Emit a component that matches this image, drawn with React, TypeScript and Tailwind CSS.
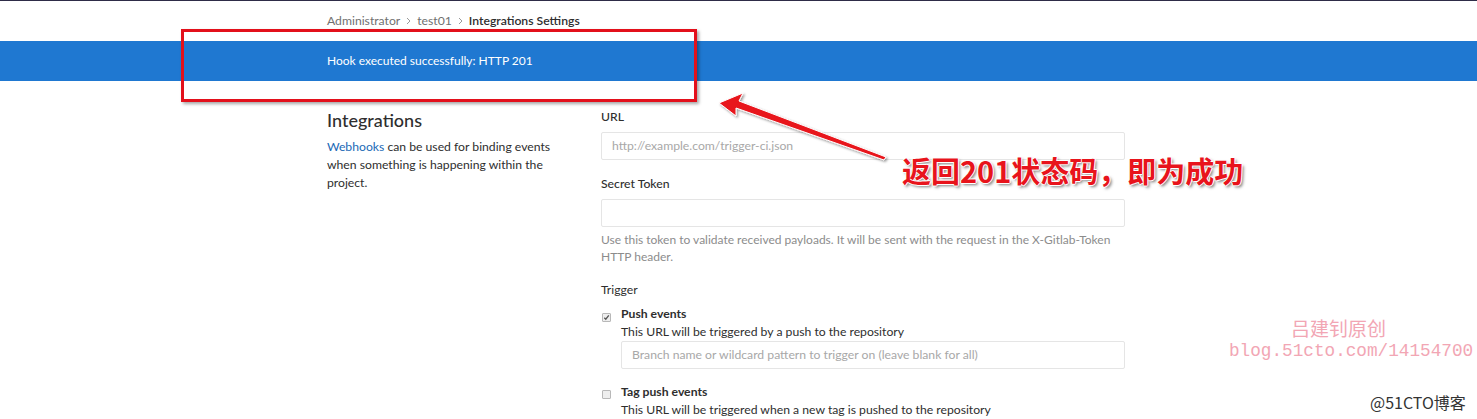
import React from "react";

const font = "font-['Lato','Noto_Sans',sans-serif]";

function Checkbox({ checked }: { checked?: boolean }) {
  return (
    <span className="inline-flex items-center justify-center w-[9px] h-[9px] border border-[#b8b8b8] bg-[#eeeeee] rounded-[1px]">
      {checked && (
        <svg width="7" height="7" viewBox="0 0 8 8">
          <path d="M1.5 4.2 L3.2 6 L6.6 1.6" stroke="#555" strokeWidth="1.5" fill="none" />
        </svg>
      )}
    </span>
  );
}

function Chevron() {
  return (
    <svg width="5" height="8" viewBox="0 0 5 8" className="mx-[6px]">
      <path d="M1 1 L4 4 L1 7" stroke="#9a9a9a" strokeWidth="1" fill="none" />
    </svg>
  );
}

export default function App() {
  return (
    <div className={`relative w-[1477px] h-[419px] overflow-hidden bg-white text-[#2e2e2e] ${font}`}>
      <div className="h-px bg-[#2e2c48]" />
      <div className="h-[40px] pl-[327px] flex items-center text-[12.2px] text-[#707070]">
        <span>Administrator</span>
        <Chevron />
        <span>test01</span>
        <Chevron />
        <span className="font-semibold text-[#2e2e2e]">Integrations Settings</span>
      </div>
      <div className="h-[40px] bg-[#1f78d1] pl-[327px] flex items-center text-white text-[12px]">
        Hook executed successfully: HTTP 201
      </div>
      <div className="flex pl-[327px]">
        <div className="w-[274px] pt-[27px]">
          <h4 className="text-[18px] leading-[24px] font-medium text-[#2e2e2e]">Integrations</h4>
          <p className="mt-[6px] text-[12.2px] leading-[18px] w-[240px]">
            <span className="text-[#1b69b6]">Webhooks</span> can be used for binding events when something is happening within the project.
          </p>
        </div>
        <div className="w-[524px] pt-[27px] text-[12.2px]">
          <div className="leading-[18px] font-medium">URL</div>
          <div className="mt-[6px] h-[28px] border border-[#e5e5e5] rounded-[2px] flex items-center px-[10px] text-[#a8a8a8]">
            http://example.com/trigger-ci.json
          </div>
          <div className="mt-[15px] leading-[18px] font-medium">Secret Token</div>
          <div className="mt-[6px] h-[28px] border border-[#e5e5e5] rounded-[2px]" />
          <div className="mt-[4px] leading-[17px] text-[#8c8c8c] text-[12px]">
            Use this token to validate received payloads. It will be sent with the request in the X-Gitlab-Token HTTP header.
          </div>
          <div className="mt-[16px] leading-[18px]">Trigger</div>
          <div className="mt-[6px] flex">
            <div className="w-[20px] pl-[1px] pt-[3px]">
              <Checkbox checked />
            </div>
            <div className="flex-1">
              <div className="leading-[18px] font-bold">Push events</div>
              <div className="leading-[18px]">This URL will be triggered by a push to the repository</div>
              <div className="h-[28px] border border-[#e5e5e5] rounded-[2px] flex items-center px-[10px] text-[#a8a8a8]">
                Branch name or wildcard pattern to trigger on (leave blank for all)
              </div>
            </div>
          </div>
          <div className="mt-[14px] flex">
            <div className="w-[20px] pl-[1px] pt-[3px]">
              <Checkbox />
            </div>
            <div className="flex-1">
              <div className="leading-[18px] font-bold">Tag push events</div>
              <div className="leading-[18px]">This URL will be triggered when a new tag is pushed to the repository</div>
            </div>
          </div>
        </div>
      </div>

      {/* Annotation: red rectangle */}
      <div className="absolute left-[181px] top-[29px] w-[516px] h-[73px] border-[3px] border-[#e3101b] shadow-[2px_2px_3px_rgba(0,0,0,0.35)]" />

      {/* Annotation arrow */}
      <svg className="absolute left-0 top-0" width="1477" height="419" viewBox="0 0 1477 419">
        <defs>
          <filter id="sh" x="-10%" y="-10%" width="130%" height="130%">
            <feDropShadow dx="1.5" dy="1.5" stdDeviation="1.2" floodColor="#000" floodOpacity="0.4" />
          </filter>
        </defs>
        <polygon
          points="719,103 743,93 739,101 886,157 884,160 736,108 736,116"
          fill="#e8141c"
          stroke="#ffffff"
          strokeWidth="1"
          filter="url(#sh)"
        />
      </svg>

      {/* Annotation text */}
      <div className="absolute left-[902px] top-[152px] text-[29px] leading-[36px] font-bold text-[#e8141c] font-['Noto_Sans_CJK_SC',sans-serif] [text-shadow:1px_0_0_#fff,-1px_0_0_#fff,0_1px_0_#fff,0_-1px_0_#fff,2px_2px_3px_rgba(0,0,0,0.5)]">
        返回201状态码，即为成功
      </div>

      {/* Watermark */}
      <div className="absolute left-[1229px] top-[316px] w-[248px] text-[#f2a6b4]">
        <div className="pl-[62px] text-[19px] leading-[24px] font-['Noto_Sans_CJK_SC',sans-serif]">吕建钊原创</div>
        <div className="text-[17.7px] leading-[22px] font-['Liberation_Mono',monospace]">blog.51cto.com/14154700</div>
      </div>
      <div className="absolute left-[1370px] top-[392px] text-[16px] leading-[20px] text-[#333] font-['Noto_Sans_CJK_SC',sans-serif]">
        @51CTO博客
      </div>
    </div>
  );
}
